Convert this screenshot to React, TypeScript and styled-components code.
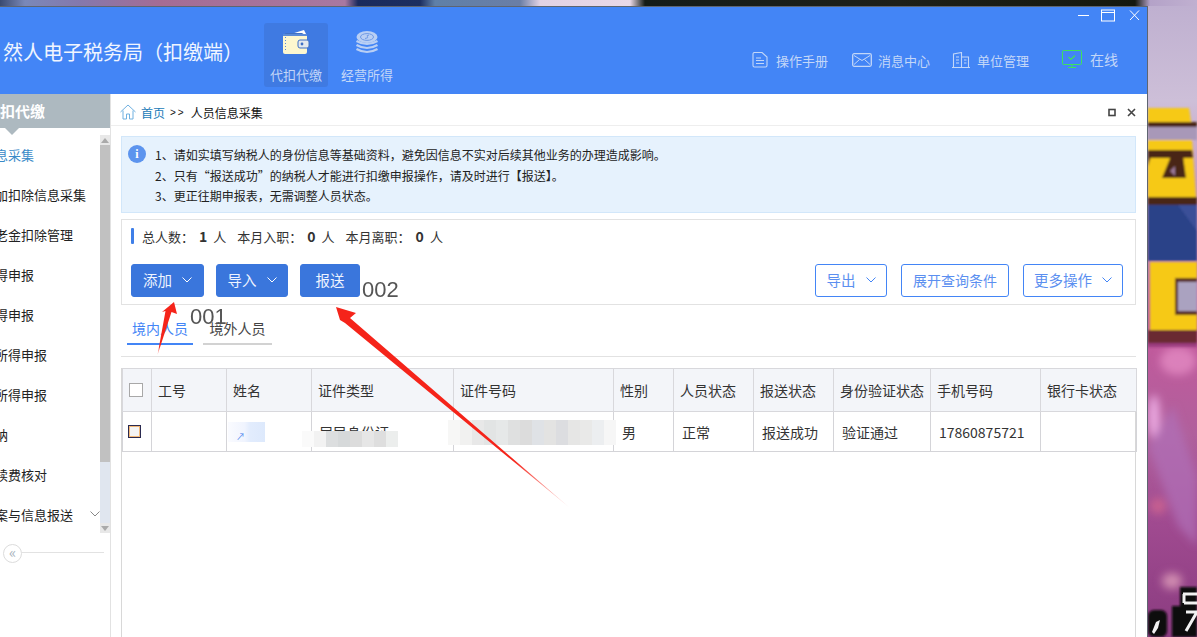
import React from 'react'
import styled, { createGlobalStyle } from 'styled-components'

const GlobalStyle = createGlobalStyle`
  html, body {
    margin: 0;
    padding: 0;
    background: #1a1a1a;
  }
  * {
    box-sizing: border-box;
  }
`

const navItems = [
  '人员信息采集',
  '专项附加扣除信息采集',
  '个人养老金扣除管理',
  '综合所得申报',
  '分类所得申报',
  '非居民所得申报',
  '限售股所得申报',
  '税款缴纳',
  '退付手续费核对',
  '优惠备案与信息报送',
]

const columns = [
  { title: '', width: 29 },
  { title: '工号', width: 75 },
  { title: '姓名', width: 85 },
  { title: '证件类型', width: 142 },
  { title: '证件号码', width: 160 },
  { title: '性别', width: 60 },
  { title: '人员状态', width: 80 },
  { title: '报送状态', width: 80 },
  { title: '身份验证状态', width: 97 },
  { title: '手机号码', width: 110 },
  { title: '银行卡状态', width: 96 },
]

const idTiles = ['#f7f7f6', '#f1f1f0', '#e8e8e8', '#e2e4e4', '#e6e8e8', '#dfe0e0', '#dcdcdc', '#dfe2e6', '#e3e3e2', '#dcdde0', '#e6e6e5', '#e9e9e8', '#eceef0', '#f6f6f6']
const typeTiles = ['#fafafa', '#f2f2f2', '#dcdedf', '#d6d9da', '#dcdcdc', '#e6e6e6', '#dedede', '#eceeed']

const Chevron = ({ color = '#fff' }: { color?: string }) => (
  <svg width="10" height="6" viewBox="0 0 10 6" fill="none">
    <path d="M0.5 0.5 L5 5 L9.5 0.5" stroke={color} strokeWidth="1" />
  </svg>
)

const WalletIcon = () => (
  <svg width="28" height="26" viewBox="0 0 28 26">
    <path d="M9 5 L22 1 L24 5 Z" fill="#fff" />
    <path d="M3 4 L20 4 L23 6 L4 6 Z" fill="#3f70c4" />
    <rect x="1" y="5" width="24" height="20" rx="2" fill="#fdf7cf" />
    <path d="M1 5 h24 v2 h-24 z" fill="#5a8bd8" />
    <path d="M3.5 8 v15" stroke="#5a8bd8" strokeWidth="1" strokeDasharray="1 2" />
    <rect x="16" y="11" width="11" height="8" rx="2" fill="#e4e9ee" stroke="#3f70c4" />
    <circle cx="20" cy="15" r="1.4" fill="#3f70c4" />
  </svg>
)

const CoinsIcon = () => (
  <svg width="24" height="26" viewBox="0 -2 24 26" fill="none">
    <ellipse cx="12" cy="6" rx="10.5" ry="6" fill="#b9cff4" />
    <ellipse cx="12" cy="6" rx="6.5" ry="3.4" stroke="#6f9ae6" />
    <path d="M10 7.5 Q14 7 12.5 5.5 Q10.5 5 14 4" stroke="#6f9ae6" />
    <path d="M1.5 10 Q12 16 22.5 10 M1.5 14 Q12 20 22.5 14 M1.5 18 Q12 24 22.5 18" stroke="#b9cff4" strokeWidth="2.2" />
  </svg>
)

const DocIcon = () => (
  <svg width="16" height="16" viewBox="0 0 16 16" fill="none" stroke="#c3d7f8" strokeWidth="1.1">
    <path d="M1 2 a1.5 1.5 0 0 1 1.5 -1.5 H10 L15 5 V13.5 a1.5 1.5 0 0 1 -1.5 1.5 H2.5 a1.5 1.5 0 0 1 -1.5 -1.5 Z" />
    <path d="M4 6 H9 M4 8.5 H12 M4 11.5 H12" />
  </svg>
)

const MailIcon = () => (
  <svg width="20" height="14" viewBox="0 0 20 14" fill="none" stroke="#c3d7f8" strokeWidth="1.3">
    <rect x="0.7" y="0.7" width="18.6" height="12.6" rx="1.5" />
    <path d="M2 2.5 L10 7.5 L18 2.5 M2 11.5 L7.5 6.5 M18 11.5 L12.5 6.5" strokeWidth="1" />
  </svg>
)

const BuildingIcon = () => (
  <svg width="18" height="16" viewBox="0 0 18 16" fill="none" stroke="#c3d7f8" strokeWidth="1.1">
    <path d="M0 15.5 H18 M1.5 15.5 V2 L9.5 0.5 V15.5 M9.5 5 H16.5 V15.5" />
    <path d="M4 5 H7 M4 8 H7 M4 11 H7 M12 8 H14.5 M12 11 H14.5" />
  </svg>
)

const MonitorIcon = () => (
  <svg width="20" height="18" viewBox="0 0 20 18" fill="none" stroke="#3ee25c">
    <rect x="0.5" y="0.5" width="19" height="14" rx="1" />
    <path d="M6.5 7 L9 9.5 L13 5.5" strokeWidth="1.2" />
    <path d="M10 14.5 V17 M6 17.5 H14" />
  </svg>
)

const HomeIcon = () => (
  <svg width="16" height="16" viewBox="0 0 16 16" fill="none" stroke="#6fb0e0" strokeWidth="1">
    <path d="M0.5 8 L8 1 L15.5 8" />
    <path d="M3 6.5 V15 H6.5 V10 H9.5 V15 H13 V6.5" />
  </svg>
)

const WindowControls = () => (
  <svg width="62" height="13" viewBox="0 0 62 13" fill="none" stroke="#fff" strokeWidth="1">
    <path d="M0 6.5 H11" />
    <rect x="23.5" y="1" width="13" height="11" />
    <path d="M24 3.5 H36" />
    <path d="M52 1.5 L61 11 M61 1.5 L52 11" />
  </svg>
)

const Page = styled.div`
  width: 1197px;
  height: 637px;
  display: flex;
  flex-direction: column;
  overflow: hidden;
  font-family: "Noto Sans CJK SC", "Liberation Sans", sans-serif;
  position: relative;
`

const TopStrip = styled.div`
  height: 6px;
  flex: none;
  background: linear-gradient(
    90deg,
    #3a4a70 0,
    #7a88b8 25px,
    #8578ac 80px,
    #a56c94 160px,
    #a878a0 345px,
    #1a2a5c 358px,
    #1c2e60 420px,
    #5f80a8 435px,
    #6a7ea6 520px,
    #e2d2e4 540px,
    #ead9e8 630px,
    #141c18 645px,
    #1e2018 900px,
    #14180f 1135px,
    #b4a2c8 1150px,
    #c0b0d0 1197px
  );
`

const DesktopRow = styled.div`
  flex: 1;
  display: flex;
  min-height: 0;
`

const Wallpaper = styled.svg`
  flex: none;
  width: 49px;
  height: 631px;
  display: block;
`

const Window = styled.div`
  width: 1148px;
  flex: none;
  display: flex;
  flex-direction: column;
  background: #fff;
  border-top: 1px solid #5e6570;
  border-right: 1px solid #5e6570;
  min-height: 0;
`

const Header = styled.header`
  height: 87px;
  flex: none;
  background: #4385f6;
  display: flex;
  position: relative;
  padding-top: 16px;
`

const Title = styled.h1`
  margin: 0 0 0 3px;
  width: 261px;
  flex: none;
  font-size: 20px;
  font-weight: 400;
  line-height: 26px;
  padding-top: 16px;
  color: #f0f5ff;
  white-space: nowrap;
`

const ModuleTab = styled.div<{ $active?: boolean }>`
  width: 64px;
  height: 64px;
  margin-right: 7px;
  border-radius: 3px;
  display: flex;
  flex-direction: column;
  align-items: center;
  justify-content: flex-end;
  gap: 11px;
  padding-bottom: 3px;
  font-size: 13px;
  line-height: 18px;
  color: #c3d7f8;
  background: ${(p) => (p.$active ? '#3f7ae2' : 'transparent')};
`

const HeaderMenu = styled.nav`
  margin-left: auto;
  padding: 28px 29px 0 0;
  display: flex;
  align-items: flex-start;
`

const MenuItem = styled.div<{ $gap: number; $space: number }>`
  display: flex;
  align-items: center;
  height: 18px;
  gap: ${(p) => p.$gap}px;
  margin-left: ${(p) => p.$space}px;
  font-size: 13px;
  color: #c3d7f8;
`

const OnlineItem = styled(MenuItem)`
  font-size: 14px;
  margin-top: -1px;
`

const WindowButtons = styled.div`
  position: absolute;
  top: 2px;
  right: 7px;
  line-height: 0;
`

const Body = styled.div`
  flex: 1;
  display: flex;
  min-height: 0;
`

const Sidebar = styled.aside`
  width: 111px;
  flex: none;
  display: flex;
  flex-direction: column;
  border-right: 1px solid #e2e2e2;
`

const SideTitle = styled.div`
  height: 34px;
  flex: none;
  position: relative;
  background: #adb9c0;
  color: #fff;
  font-size: 15px;
  font-weight: 700;
  line-height: 34px;
  white-space: nowrap;
  text-indent: -15px;

  &:after {
    content: '';
    position: absolute;
    left: 5px;
    top: 34px;
    border: 7px solid transparent;
    border-top-color: #adb9c0;
    border-bottom: 0;
  }
`

const SideScroll = styled.div`
  height: 400px;
  margin-top: 7px;
  flex: none;
  display: flex;
`

const NavList = styled.ul`
  width: 100px;
  flex: none;
  margin: -1px 0 0;
  padding: 0;
  list-style: none;
  overflow: hidden;
`

const NavItem = styled.li<{ $active?: boolean }>`
  height: 40px;
  width: 144px;
  margin-left: -44px;
  display: flex;
  align-items: center;
  justify-content: space-between;
  font-size: 13px;
  white-space: nowrap;
  color: ${(p) => (p.$active ? '#3a8ac8' : '#222')};
`

const ScrollBar = styled.div`
  width: 10px;
  height: 398px;
  display: flex;
  flex-direction: column;
  background: #e0e6ef;
`

const ScrollArrow = styled.div<{ $down?: boolean }>`
  height: 10px;
  flex: none;
  background: #e8e8e8;
  display: flex;
  align-items: center;
  justify-content: center;

  &:after {
    content: '';
    border: 4px solid transparent;
    ${(p) => (p.$down ? 'border-top: 5px solid #aaa; border-bottom: 0;' : 'border-bottom: 5px solid #aaa; border-top: 0;')}
  }
`

const ScrollThumb = styled.div`
  height: 317px;
  flex: none;
  background: #c1c1c1;
`

const ScrollRest = styled.div`
  flex: 1;
`

const Collapse = styled.div`
  display: flex;
  align-items: center;
  padding: 9px 6px 0 3px;
`

const CollapseButton = styled.div`
  width: 19px;
  height: 19px;
  flex: none;
  border: 1px solid #dcdcdc;
  border-radius: 50%;
  color: #a9b4bd;
  font-size: 15px;
  line-height: 14px;
  text-align: center;
  background: #fff;
`

const CollapseLine = styled.div`
  flex: 1;
  height: 1px;
  margin-bottom: 3px;
  background: #e2e2e2;
`

const Main = styled.main`
  flex: 1;
  min-width: 0;
  display: flex;
  flex-direction: column;
  padding: 0 11px 0 10px;
`

const Breadcrumb = styled.div`
  height: 32px;
  flex: none;
  margin: 0 -11px 0 -10px;
  padding: 5px 11px 0 9px;
  display: flex;
  align-items: center;
  font-size: 12px;
  color: #111;
  border-bottom: 1px solid #eee;
`

const Crumb = styled.a`
  margin-left: 5px;
  color: #1b7bb8;
`

const Sep = styled.span`
  margin: 0 5px;
  font-family: "Liberation Sans", sans-serif;
  font-size: 10px;
  letter-spacing: 2px;
`

const PanelTools = styled.svg`
  margin-left: auto;
  display: block;
`

const Notice = styled.div`
  margin-top: 10px;
  height: 77px;
  flex: none;
  display: flex;
  padding: 8px 0 0 6px;
  background: #e6f2fd;
  border: 1px solid #d2e7fa;
`

const InfoBadge = styled.div`
  width: 18px;
  height: 18px;
  flex: none;
  margin-right: 9px;
  border-radius: 50%;
  background: #5c94ee;
  color: #fff;
  font: 700 12px/18px "Liberation Serif", serif;
  text-align: center;
`

const NoticeText = styled.p`
  margin: 0;
  font-size: 12px;
  line-height: 20.5px;
  color: #222;
`

const ToolCard = styled.section`
  margin-top: 6px;
  height: 86px;
  flex: none;
  padding: 8px 12px 0 9px;
  border: 1px solid #e2e2e2;
`

const Stats = styled.div`
  height: 16px;
  display: flex;
  align-items: center;
  font-size: 13px;
  color: #333;
  white-space: pre;
`

const StatsBar = styled.span`
  width: 3px;
  height: 16px;
  margin-right: 8px;
  border-radius: 1px;
  background: #3f7fe8;
`

const StatLabel = styled.span`
  margin-right: 11px;
`

const StatValue = styled.b`
  font-size: 14px;
  margin: 0 6px 0 5px;
`

const Actions = styled.div`
  margin-top: 20px;
  display: flex;
`

const ActionGroup = styled.div<{ $right?: boolean }>`
  display: flex;
  gap: ${(p) => (p.$right ? 14 : 12)}px;
  margin-left: ${(p) => (p.$right ? 'auto' : 0)};
`

const Button = styled.button<{ $outline?: boolean; $width: number; $fontSize?: number }>`
  width: ${(p) => p.$width}px;
  height: 33px;
  padding: 0 0 2px;
  display: flex;
  align-items: center;
  justify-content: center;
  gap: 10px;
  font: inherit;
  font-size: ${(p) => p.$fontSize ?? 14.5}px;
  border-radius: 3px;
  border: 1px solid ${(p) => (p.$outline ? '#4385f6' : '#3a76dc')};
  color: ${(p) => (p.$outline ? '#5b8ff0' : '#eef4ff')};
  background: ${(p) => (p.$outline ? '#fff' : '#3a76dc')};
`

const Tabs = styled.div`
  height: 52px;
  flex: none;
  padding: 13px 0 0 6px;
  display: flex;
  gap: 10px;
  border-bottom: 1px solid #e2e2e2;
`

const TabItem = styled.div<{ $active?: boolean; $width: number }>`
  width: ${(p) => p.$width}px;
  height: 27px;
  font-size: 14px;
  line-height: 20px;
  text-align: center;
  color: ${(p) => (p.$active ? '#4385f6' : '#444')};
  border-bottom: 2px solid ${(p) => (p.$active ? '#4385f6' : '#d2d2d2')};
`

const TableWrap = styled.div`
  margin-top: 11px;
  flex: 1;
  min-height: 0;
  border-left: 1px solid #d8d8d8;
  border-right: 1px solid #d8d8d8;
`

const Table = styled.table`
  width: 100%;
  table-layout: fixed;
  border-collapse: collapse;
  font-size: 14px;
  color: #333;
`

const HeadCell = styled.th`
  height: 43px;
  padding: 0 0 0 6px;
  font-weight: 400;
  text-align: left;
  white-space: nowrap;
  background: #f3f5f9;
  border: 1px solid #d8d8dc;
`

const Cell = styled.td<{ $pad?: number }>`
  position: relative;
  height: 40px;
  padding: 0 0 0 ${(p) => p.$pad ?? 8}px;
  white-space: nowrap;
  border: 1px solid #d4d4d8;
`

const HeadCheck = styled.div`
  width: 14px;
  height: 14px;
  border: 1px solid #a8a8a8;
  background: #fff;
`

const RowCheck = styled.div`
  width: 13px;
  height: 13px;
  border: 1px solid #2a2a50;
  box-shadow: inset 0 0 0 1px #f2b878;
  background: #f4f4f4;
`

const NameBlur = styled.div`
  position: absolute;
  left: 1px;
  top: 10px;
  width: 37px;
  height: 20px;
  background: linear-gradient(90deg, #fafbff 0, #f0f4fe 45%, #e2ecfd 60%, #dde9fc 100%);
  color: #4f88ee;
  font-size: 9px;
  line-height: 30px;
  padding-left: 8px;
  overflow: hidden;
`

const Mosaic = styled.div<{ $left: number; $top: number; $height: number }>`
  position: absolute;
  left: ${(p) => p.$left}px;
  top: ${(p) => p.$top}px;
  height: ${(p) => p.$height}px;
  display: flex;
`

const Tile = styled.span<{ $color: string; $width: number }>`
  width: ${(p) => p.$width}px;
  height: 100%;
  background: ${(p) => p.$color};
`

const Annotations = styled.svg`
  position: absolute;
  left: 0;
  top: 0;
  pointer-events: none;
`

const Label = styled.span<{ $left: number; $top: number }>`
  position: absolute;
  left: ${(p) => p.$left}px;
  top: ${(p) => p.$top}px;
  font-family: "Liberation Sans", sans-serif;
  font-size: 22px;
  line-height: 24px;
  color: #555;
`

export default function App() {
  return (
    <Page>
      <GlobalStyle />
      <TopStrip />
      <DesktopRow>
        <Window>
          <Header>
            <Title>然人电子税务局（扣缴端）</Title>
            <ModuleTab $active>
              <WalletIcon />
              代扣代缴
            </ModuleTab>
            <ModuleTab>
              <CoinsIcon />
              经营所得
            </ModuleTab>
            <HeaderMenu>
              <MenuItem $gap={8} $space={0}><DocIcon />操作手册</MenuItem>
              <MenuItem $gap={6} $space={24}><MailIcon />消息中心</MenuItem>
              <MenuItem $gap={7} $space={22}><BuildingIcon />单位管理</MenuItem>
              <OnlineItem $gap={8} $space={33}><MonitorIcon />在线</OnlineItem>
            </HeaderMenu>
            <WindowButtons><WindowControls /></WindowButtons>
          </Header>
          <Body>
            <Sidebar>
              <SideTitle>代扣代缴</SideTitle>
              <SideScroll>
                <NavList>
                  {navItems.map((item, i) => (
                    <NavItem key={item} $active={i === 0}>
                      {item}
                      {i === navItems.length - 1 && <Chevron color="#888" />}
                    </NavItem>
                  ))}
                </NavList>
                <ScrollBar>
                  <ScrollArrow />
                  <ScrollThumb />
                  <ScrollRest />
                  <ScrollArrow $down />
                </ScrollBar>
              </SideScroll>
              <Collapse>
                <CollapseButton>«</CollapseButton>
                <CollapseLine />
              </Collapse>
            </Sidebar>
            <Main>
              <Breadcrumb>
                <HomeIcon />
                <Crumb>首页</Crumb>
                <Sep>&gt;&gt;</Sep>
                人员信息采集
                <PanelTools width="28" height="9" viewBox="0 0 28 9" fill="none" stroke="#444">
                  <rect x="1" y="1.5" width="6" height="6" strokeWidth="1.6" />
                  <path d="M20 1 L27 8 M27 1 L20 8" strokeWidth="1.6" />
                </PanelTools>
              </Breadcrumb>
              <Notice>
                <InfoBadge>i</InfoBadge>
                <NoticeText>
                  1、请如实填写纳税人的身份信息等基础资料，避免因信息不实对后续其他业务的办理造成影响。<br />
                  2、只有“报送成功”的纳税人才能进行扣缴申报操作，请及时进行【报送】。<br />
                  3、更正往期申报表，无需调整人员状态。
                </NoticeText>
              </Notice>
              <ToolCard>
                <Stats>
                  <StatsBar />
                  总人数：<StatValue>1</StatValue><StatLabel>人</StatLabel>
                  本月入职：<StatValue>0</StatValue><StatLabel>人</StatLabel>
                  本月离职：<StatValue>0</StatValue>人
                </Stats>
                <Actions>
                  <ActionGroup>
                    <Button $width={73}>添加<Chevron /></Button>
                    <Button $width={72}>导入<Chevron /></Button>
                    <Button $width={60}>报送</Button>
                  </ActionGroup>
                  <ActionGroup $right>
                    <Button $outline $width={72}>导出<Chevron color="#4385f6" /></Button>
                    <Button $outline $width={108} $fontSize={14}>展开查询条件</Button>
                    <Button $outline $width={100}>更多操作<Chevron color="#4385f6" /></Button>
                  </ActionGroup>
                </Actions>
              </ToolCard>
              <Tabs>
                <TabItem $active $width={66}>境内人员</TabItem>
                <TabItem $width={69}>境外人员</TabItem>
              </Tabs>
              <TableWrap>
                <Table>
                  <colgroup>
                    {columns.map((col, i) => (
                      <col key={i} style={{ width: col.width }} />
                    ))}
                  </colgroup>
                  <thead>
                    <tr>
                      {columns.map((col, i) => (
                        <HeadCell key={i}>{i === 0 ? <HeadCheck /> : col.title}</HeadCell>
                      ))}
                    </tr>
                  </thead>
                  <tbody>
                    <tr>
                      <Cell $pad={5}><RowCheck /></Cell>
                      <Cell />
                      <Cell>
                        <NameBlur>↗</NameBlur>
                      </Cell>
                      <Cell $pad={7}>
                        居民身份证
                        <Mosaic $left={-10} $top={19} $height={16}>
                          {typeTiles.map((color, i) => (
                            <Tile key={i} $color={color} $width={12} />
                          ))}
                        </Mosaic>
                      </Cell>
                      <Cell>
                        <Mosaic $left={-6} $top={8} $height={25}>
                          {idTiles.map((color, i) => (
                            <Tile key={i} $color={color} $width={12} />
                          ))}
                        </Mosaic>
                      </Cell>
                      <Cell>男</Cell>
                      <Cell>正常</Cell>
                      <Cell>报送成功</Cell>
                      <Cell>验证通过</Cell>
                      <Cell>17860875721</Cell>
                      <Cell />
                    </tr>
                  </tbody>
                </Table>
              </TableWrap>
            </Main>
          </Body>
        </Window>
        <Wallpaper viewBox="0 0 49 631" preserveAspectRatio="none">
          <defs>
            <linearGradient id="wall" x1="0" y1="0" x2="0" y2="1">
              <stop offset="0" stopColor="#bfb0d0" />
              <stop offset="0.15" stopColor="#cdbfd8" />
              <stop offset="0.54" stopColor="#c05a9c" />
              <stop offset="0.68" stopColor="#b0609c" />
              <stop offset="0.82" stopColor="#a04a90" />
              <stop offset="1" stopColor="#8a3c80" />
            </linearGradient>
            <filter id="soft" x="-10%" y="-10%" width="120%" height="120%">
              <feGaussianBlur stdDeviation="0.8" />
            </filter>
            <filter id="softer" x="-30%" y="-30%" width="160%" height="160%">
              <feGaussianBlur stdDeviation="4" />
            </filter>
          </defs>
          <rect width="49" height="631" fill="url(#wall)" />
          <g filter="url(#softer)">
            <ellipse cx="6" cy="411" rx="6" ry="22" fill="#eaa8e0" />
            <path d="M0 440 L25 400 L49 470 V540 L30 520 Z" fill="#b070b8" opacity="0.7" />
            <ellipse cx="30" cy="355" rx="18" ry="14" fill="#e890c8" opacity="0.7" />
            <ellipse cx="24" cy="575" rx="10" ry="8" fill="#d08cb0" />
            <ellipse cx="10" cy="500" rx="8" ry="8" fill="#c86090" />
          </g>
          <g filter="url(#soft)">
            <rect y="116" width="49" height="5" fill="#4a2612" />
            <path d="M0 102 H41 L43 116 H0 Z" fill="#f6c914" />
            <rect y="121" width="49" height="13" fill="#a898b8" />
            <path d="M0 134 H44 L48 191 H0 Z" fill="#f6c914" />
            <path d="M0 144 H44 L45 152 H0 Z" fill="#4a2612" />
            <path d="M23 150 H35 L38 172 H14 Z" fill="#4a2612" />
            <path d="M22 165 L27 160 L27 170 Z" fill="#9a7898" />
            <path d="M0 150 H3 L0 160 Z" fill="#4a2612" />
            <rect y="191" width="49" height="9" fill="#4a2612" />
            <rect y="199" width="49" height="56" fill="#2c4288" />
            <path d="M30 199 H49 V225 Z" fill="#3a5098" />
            <rect y="324" width="49" height="13" fill="#6a2c30" />
            <rect x="2" y="256" width="47" height="68" fill="#f6c914" />
            <rect x="27" y="272" width="22" height="37" fill="#5a2e22" />
            <rect x="30" y="276" width="19" height="29" fill="#aaa2c0" />
            <rect y="337" width="49" height="4" fill="#8a2c70" opacity="0.7" />
            <rect x="32" y="581" width="17" height="50" fill="#0c0810" />
            <rect y="604" width="19" height="27" rx="6" fill="#0c0810" />
            <rect x="24" y="600" width="10" height="31" fill="#0c0810" />
          </g>
          <path d="M4 626 L8 616 L12 614 L10 622 L6 628 Z" fill="#f2f2f2" />
          <path d="M35 588 H49 M36 597 H49 M36 588 V597 M38 606 H49 L38 625" fill="none" stroke="#f2f2f2" strokeWidth="3" />
        </Wallpaper>
      </DesktopRow>
      <Annotations width="1197" height="637" viewBox="0 0 1197 637">
        <defs>
          <linearGradient id="arrowFade" gradientUnits="userSpaceOnUse" x1="345" y1="315" x2="570" y2="508">
            <stop offset="0" stopColor="#f5241a" />
            <stop offset="0.75" stopColor="#f5241a" />
            <stop offset="1" stopColor="#f5241a" stopOpacity="0.1" />
          </linearGradient>
          <linearGradient id="arrowFadeUp" gradientUnits="userSpaceOnUse" x1="170" y1="310" x2="157" y2="355">
            <stop offset="0" stopColor="#f5241a" />
            <stop offset="0.8" stopColor="#f5241a" />
            <stop offset="1" stopColor="#f5241a" stopOpacity="0.2" />
          </linearGradient>
        </defs>
        <polygon points="174,302 177,314 171.5,312 157.5,355 165.5,311 162,312" fill="url(#arrowFadeUp)" />
        <polygon points="336,307 356,313 350,318 570,508 345,323 340,320" fill="url(#arrowFade)" />
      </Annotations>
      <Label $left={362} $top={278}>002</Label>
      <Label $left={190} $top={305}>001</Label>
    </Page>
  )
}
